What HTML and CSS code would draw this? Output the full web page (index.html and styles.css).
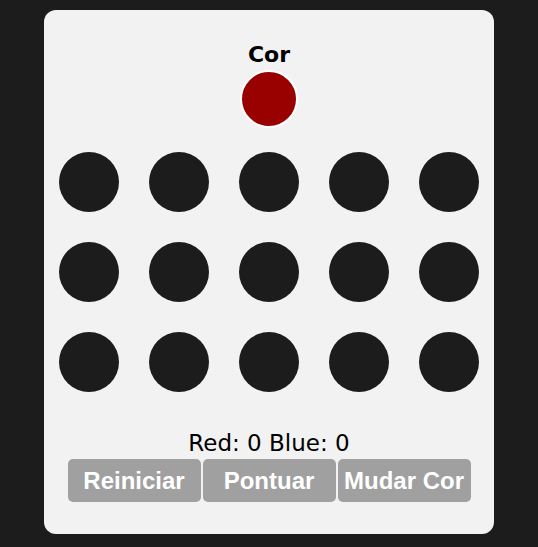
FILE: index.html
```html
<!DOCTYPE html>
<html lang="pt">
<head>
  <meta charset="UTF-8">
  <meta name="viewport" content="width=device-width, initial-scale=1.0">
  <title>Jogo da Cor</title>
  <link rel="stylesheet" href="styles.css">
</head>
<body>
  <div class="board">
    <h2 class="title">Cor</h2>
    <div class="current"></div>
    <div class="grid">
      <div class="dot"></div><div class="dot"></div><div class="dot"></div><div class="dot"></div><div class="dot"></div>
      <div class="dot"></div><div class="dot"></div><div class="dot"></div><div class="dot"></div><div class="dot"></div>
      <div class="dot"></div><div class="dot"></div><div class="dot"></div><div class="dot"></div><div class="dot"></div>
    </div>
    <p class="score">Red: 0 Blue: 0</p>
    <div class="actions">
      <button>Reiniciar</button>
      <button>Pontuar</button>
      <button>Mudar Cor</button>
    </div>
  </div>
</body>
</html>
```

FILE: styles.css
```css
body {
  background-color: #1c1c1c;
  margin: 0;
  font-family: "DejaVu Sans", sans-serif;
}
.board {
  width: 450px;
  height: 524px;
  margin: 10px auto 0;
  background-color: #f2f2f2;
  border-radius: 12px;
  display: flex;
  flex-direction: column;
  align-items: center;
  box-sizing: border-box;
  padding-top: 30px;
}
.title {
  margin: 0;
  font-size: 22px;
  line-height: 30px;
  font-weight: 700;
  color: #000;
}
.current {
  width: 54px;
  height: 54px;
  border: 2px solid #fff;
  border-radius: 50%;
  background-color: #990000;
  margin-top: 0;
}
.grid {
  display: grid;
  grid-template-columns: repeat(5, 60px);
  gap: 30px;
  margin-top: 24px;
}
.dot {
  width: 60px;
  height: 60px;
  border-radius: 50%;
  background-color: #1c1c1c;
}
.score {
  margin: 37px 0 0;
  font-size: 23px;
  line-height: 28px;
  color: #000;
}
.actions {
  display: flex;
  gap: 2px;
  margin-top: 2px;
}
button {
  width: 133px;
  height: 43px;
  background-color: #a0a0a0;
  color: #fff;
  border: none;
  border-radius: 5px;
  font-family: "Liberation Sans", Arial, sans-serif;
  font-size: 24px;
  font-weight: 700;
  padding: 0;
  cursor: pointer;
}
```
